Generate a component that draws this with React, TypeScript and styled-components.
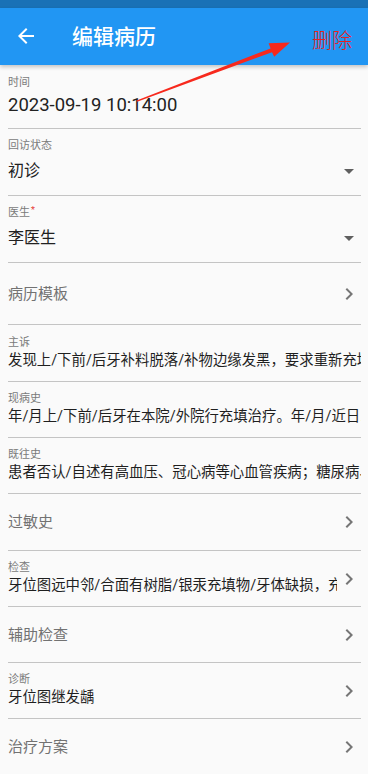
import React, { FC } from 'react'
import styled, { createGlobalStyle } from 'styled-components'

const GlobalStyle = createGlobalStyle`
  html, body {
    margin: 0;
    padding: 0;
    background: #fafafa;
  }

  body {
    font-family: Roboto, 'Noto Sans CJK SC', sans-serif;
    color: #212121;
  }
`

type Field =
  | { kind: 'time'; label: string; value: string; height: number }
  | { kind: 'select'; label: string; value: string; height: number; required?: boolean }
  | { kind: 'link'; title: string; height: number }
  | { kind: 'text'; label: string; value: string; height: number; link?: boolean }

const FIELDS: Field[] = [
  { kind: 'time', label: '时间', value: '2023-09-19 10:14:00', height: 64 },
  { kind: 'select', label: '回访状态', value: '初诊', height: 67 },
  { kind: 'select', label: '医生', value: '李医生', height: 67, required: true },
  { kind: 'link', title: '病历模板', height: 62 },
  {
    kind: 'text',
    label: '主诉',
    value: '发现上/下前/后牙补料脱落/补物边缘发黑，要求重新充填治疗',
    height: 57,
  },
  {
    kind: 'text',
    label: '现病史',
    value: '年/月上/下前/后牙在本院/外院行充填治疗。年/月/近日.补料脱落',
    height: 56,
  },
  {
    kind: 'text',
    label: '既往史',
    value: '患者否认/自述有高血压、冠心病等心血管疾病；糖尿病、血液病等',
    height: 56,
  },
  { kind: 'link', title: '过敏史', height: 57 },
  {
    kind: 'text',
    label: '检查',
    value: '牙位图远中邻/合面有树脂/银汞充填物/牙体缺损，充填体边缘不密合',
    height: 56,
    link: true,
  },
  { kind: 'link', title: '辅助检查', height: 56 },
  { kind: 'text', label: '诊断', value: '牙位图继发龋', height: 56, link: true },
  { kind: 'link', title: '治疗方案', height: 56 },
]

const BackIcon: FC = () => (
  <svg width="24" height="24" viewBox="0 0 24 24" fill="#ffffff">
    <path d="M20 11H7.83l5.59-5.59L12 4l-8 8 8 8 1.41-1.41L7.83 13H20v-2z" />
  </svg>
)

const ChevronIcon: FC = () => (
  <IconBox>
    <svg width="24" height="24" viewBox="0 0 24 24" fill="#767676">
      <path d="M10 6L8.59 7.41 13.17 12l-4.58 4.59L10 18l6-6z" />
    </svg>
  </IconBox>
)

const DropIcon: FC = () => (
  <IconBox>
    <svg width="24" height="24" viewBox="0 0 24 24" fill="#5f5f5f">
      <path d="M7 10l5 5 5-5z" />
    </svg>
  </IconBox>
)

const renderField = (field: Field, index: number) => {
  switch (field.kind) {
    case 'time':
      return (
        <TimeRow key={index} $height={field.height}>
          <Label>{field.label}</Label>
          <TimeValue>{field.value}</TimeValue>
        </TimeRow>
      )
    case 'select':
      return (
        <SelectRow key={index} $height={field.height}>
          <Label>
            {field.label}
            {field.required && <Required>*</Required>}
          </Label>
          <SelectLine>
            <SelectValue>{field.value}</SelectValue>
            <DropIcon />
          </SelectLine>
        </SelectRow>
      )
    case 'link':
      return (
        <LinkRow key={index} $height={field.height}>
          <LinkTitle>{field.title}</LinkTitle>
          <ChevronIcon />
        </LinkRow>
      )
    case 'text':
      return (
        <TextRow key={index} $height={field.height}>
          <TextBlock>
            <Label>{field.label}</Label>
            <TextValue>{field.value}</TextValue>
          </TextBlock>
          {field.link && <ChevronIcon />}
        </TextRow>
      )
  }
}

const App: FC = () => {
  return (
    <Page>
      <GlobalStyle />
      <StatusBar />
      <AppBar>
        <BackButton>
          <BackIcon />
        </BackButton>
        <Title>编辑病历</Title>
        <DeleteButton>删除</DeleteButton>
      </AppBar>
      <Form>{FIELDS.map(renderField)}</Form>
      {/* red annotation arrow drawn on top of the screenshot */}
      <Annotation viewBox="0 0 368 774" width="368" height="774">
        <polygon
          points="136.6,100.4 270.6,48.4 268.6,43.2 290,42.6 274.2,56.8 272,52.2 137.2,101.8"
          fill="#f7291d"
        />
      </Annotation>
    </Page>
  )
}

export default App

const Page = styled.div`
  position: relative;
  width: 368px;
  height: 774px;
  overflow: hidden;
  display: flex;
  flex-direction: column;
  background: #fafafa;
`

const StatusBar = styled.div`
  height: 8px;
  flex-shrink: 0;
  background: #1971b6;
`

const AppBar = styled.header`
  height: 57px;
  flex-shrink: 0;
  display: flex;
  align-items: center;
  background: #2196f3;
  box-shadow: 0 2px 4px rgba(0, 0, 0, 0.22);
  position: relative;
  z-index: 1;
`

const BackButton = styled.div`
  width: 24px;
  height: 24px;
  margin-left: 14px;
  margin-top: -2px;
  display: flex;
`

const Title = styled.h1`
  margin: 0 0 0 34px;
  font-size: 21px;
  font-weight: 500;
  color: #ffffff;
  line-height: 28px;
`

const DeleteButton = styled.span`
  margin-left: auto;
  margin-right: 16px;
  padding-top: 8px;
  font-size: 20px;
  font-weight: 300;
  color: #e8211e;
  line-height: 28px;
`

const Form = styled.main`
  display: flex;
  flex-direction: column;
  padding: 0 7px 0 8px;
`

const RowBase = styled.div<{ $height: number }>`
  box-sizing: border-box;
  height: ${(p) => p.$height}px;
  flex-shrink: 0;
  border-bottom: 1px solid #c4c4c4;
`

const TimeRow = styled(RowBase)`
  display: flex;
  flex-direction: column;
  padding-top: 11px;
`

const SelectRow = styled(RowBase)`
  display: flex;
  flex-direction: column;
  padding-top: 10px;
`

const LinkRow = styled(RowBase)`
  display: flex;
  align-items: center;
`

const TextRow = styled(RowBase)`
  display: flex;
  align-items: center;
`

const Label = styled.div`
  font-size: 11px;
  line-height: 14px;
  color: #7a7a7a;
  white-space: nowrap;
`

const Required = styled.sup`
  color: #e53935;
  font-size: 9px;
  margin-left: 1px;
  vertical-align: 3px;
  line-height: 0;
`

const TimeValue = styled.div`
  margin-top: 3px;
  font-size: 18.5px;
  line-height: 24px;
  color: #222222;
`

const SelectLine = styled.div`
  margin-top: 7px;
  height: 22px;
  display: flex;
  align-items: center;
`

const SelectValue = styled.div`
  flex: 1;
  font-size: 16px;
  line-height: 22px;
  color: #212121;
`

const LinkTitle = styled.div`
  flex: 1;
  font-size: 15px;
  line-height: 20px;
  color: #727272;
`

const TextBlock = styled.div`
  flex: 1;
  min-width: 0;
  display: flex;
  flex-direction: column;
`

const TextValue = styled.div`
  margin-top: 1px;
  font-size: 14.4px;
  line-height: 20px;
  color: #1f1f1f;
  white-space: nowrap;
  overflow: hidden;
`

const IconBox = styled.div`
  width: 24px;
  height: 24px;
  flex-shrink: 0;
  display: flex;
`

const Annotation = styled.svg`
  position: absolute;
  left: 0;
  top: 0;
  pointer-events: none;
  z-index: 2;
`
